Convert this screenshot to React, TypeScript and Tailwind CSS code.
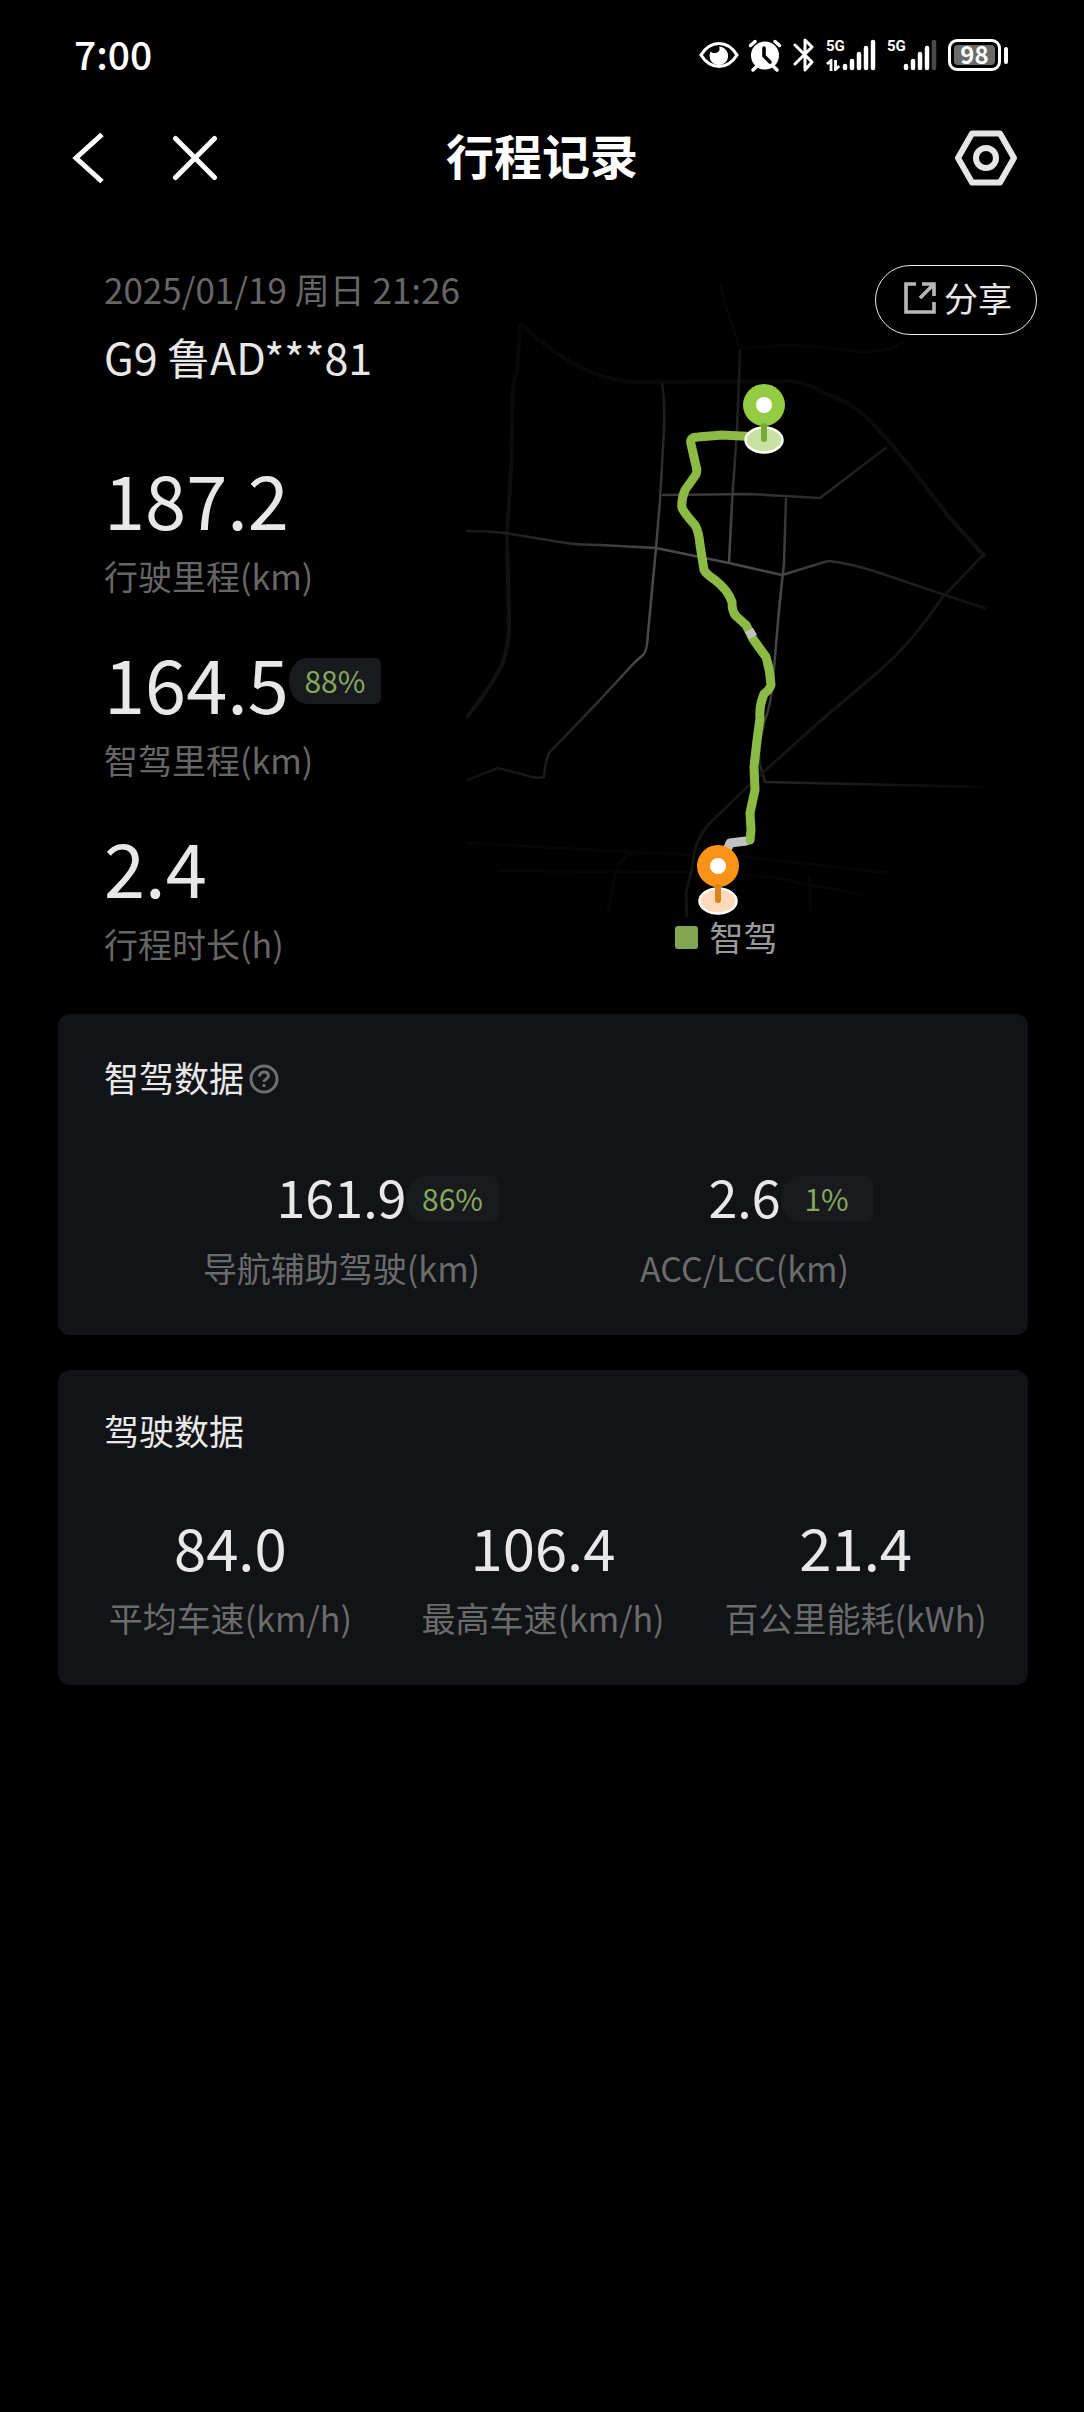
import React from 'react'

const driving = [
  { value: '84.0', label: '平均车速(km/h)' },
  { value: '106.4', label: '最高车速(km/h)' },
  { value: '21.4', label: '百公里能耗(kWh)' },
]

const Signal = ({ weak, data }: { weak?: boolean; data?: boolean }) => (
  <div className="flex h-8 items-end">
    <div className="flex h-8 w-4 flex-col justify-between">
      <span className="font-['Roboto'] text-[15px] leading-[15px] font-bold">5G</span>
      {data && (
        <svg viewBox="0 0 14 12" className="h-3 w-[14px]" fill="none" stroke="currentColor" strokeWidth="2.800">
          <path d="M1 5l4-3.400V12M9.500 1v9.400L13.400 7" />
        </svg>
      )}
    </div>
    <svg viewBox="0 0 34 32" className="h-8 w-[34px]" stroke="currentColor" strokeWidth="4.500" strokeLinecap="round">
      <path d="M3 29v-2M10 29v-7M17 29V15M24 29V9" />
      <path d="M31 29V3" stroke={weak ? '#4a4a4a' : 'currentColor'} />
    </svg>
  </div>
)

const StatusBar = () => (
  <div className="flex h-[110px] items-center justify-between pr-[76px] pl-[74px] text-white">
    <span className="pb-1 text-[39px] leading-[48px] font-medium">7:00</span>
    <div className="flex items-center">
      <svg viewBox="0 0 40 32" className="mr-[9px] h-8 w-10" fill="none">
        <path d="M2 16C7 8 13 4.500 20 4.500S33 8 38 16C33 24 27 27.500 20 27.500S7 24 2 16z" stroke="currentColor" strokeWidth="3.200" />
        <path d="M20 7.500c1.500 3 0 6-3.500 6.500-2.500.3-4-.8-5-1.500a9.300 9.300 0 1 0 8.500-5z" fill="currentColor" />
      </svg>
      <svg viewBox="0 0 34 34" className="mr-[11px] h-[34px] w-[34px]" fill="none" stroke="currentColor" strokeLinecap="round">
        <circle cx="17" cy="17.500" r="14" fill="currentColor" stroke="none" />
        <path d="M2.500 7.500l4.500-4M31.500 7.500l-4.500-4M8 29l-3 3M26 29l3 3" strokeWidth="3.400" />
        <path d="M16 10v8l6 6" stroke="#000" strokeWidth="3.600" strokeLinejoin="round" />
      </svg>
      <svg viewBox="0 0 22 34" className="mr-[11px] h-[34px] w-[22px]" fill="none" stroke="currentColor" strokeWidth="3" strokeLinejoin="round" strokeLinecap="round">
        <path d="M2 7l17 17-7 8V2l7 7L2 26" />
      </svg>
      <Signal data />
      <div className="w-[11px]" />
      <Signal weak />
      <div className="ml-[11px] flex h-8 w-[53px] items-center justify-center rounded-[9px] border-[3px] border-white p-[3px]">
        <span className="flex h-full w-full items-center justify-center rounded-[4px] bg-[#6b6b6b] pb-[2px] text-[24px] leading-[20px] font-bold">98</span>
      </div>
      <div className="ml-[3px] h-[17px] w-1 rounded-full bg-white" />
    </div>
  </div>
)

const TitleBar = () => (
  <header className="relative flex h-24 items-center justify-between pr-[66px] pl-[72px] text-white">
    <div className="flex items-center gap-[68px]">
      <button aria-label="返回">
        <svg viewBox="0 0 32 50" className="h-[50px] w-8" fill="none" stroke="currentColor" strokeWidth="5">
          <path d="M30 1.500L4 25l26 23.500" />
        </svg>
      </button>
      <button aria-label="关闭">
        <svg viewBox="0 0 46 46" className="h-[46px] w-[46px]" fill="none" stroke="currentColor" strokeWidth="5" strokeLinecap="round">
          <path d="M3.500 3.500l39 39M42.500 3.500l-39 39" />
        </svg>
      </button>
    </div>
    <h1 className="absolute left-1/2 -translate-x-1/2 pb-2 text-[48px] leading-[60px] font-bold">行程记录</h1>
    <button aria-label="设置" className="text-[#e6e6e6]">
      <svg viewBox="0 0 64 58" className="h-[58px] w-16" fill="none" stroke="currentColor" strokeWidth="6" strokeLinejoin="round">
        <path d="M18 4.500h28L60 29 46 53.500H18L4 29z" />
        <circle cx="32" cy="29" r="10" />
      </svg>
    </button>
  </header>
)

const Badge = ({ children, className }: { children: React.ReactNode; className: string }) => (
  <span className={'absolute left-full flex h-[46px] w-[92px] items-center justify-center rounded-[18px_6px_6px_18px/23px_6px_6px_23px] bg-[#191a1e] pb-[2px] text-[30px] leading-[40px] text-[#84a85c] ' + className}>
    {children}
  </span>
)

const Stat = ({ value, label, badge }: { value: string; label: string; badge?: string }) => (
  <div className="flex flex-col items-start gap-[18px]">
    <div className="relative text-[74px] leading-[80px] text-[#e8e8e9]">
      {value}
      {badge && <Badge className="top-4">{badge}</Badge>}
    </div>
    <div className="text-[34px] leading-[40px] text-[#666666]">{label}</div>
  </div>
)

const Pin = ({ x, y, color, stem, pad }: { x: number; y: number; color: string; stem: string; pad: string }) => (
  <g>
    <ellipse cx={x} cy={y + 35} rx="18.500" ry="12.500" fill={pad} stroke="#fff" strokeWidth="2.500" />
    <circle cx={x} cy={y} r="21" fill={color} />
    <circle cx={x} cy={y} r="8" fill="#fff" />
    <path d={`M${x} ${y + 21}v13`} stroke={stem} strokeWidth="6" strokeLinecap="round" />
  </g>
)

const TripMap = () => (
  <svg viewBox="466 277 520 640" className="h-auto w-full" fill="none" strokeLinejoin="round">
    <defs>
      <radialGradient id="road" gradientUnits="userSpaceOnUse" cx="700" cy="610" r="330">
        <stop offset="0" stopColor="#505050" />
        <stop offset="0.25" stopColor="#464646" />
        <stop offset="0.5" stopColor="#282828" />
        <stop offset="0.8" stopColor="#131313" />
        <stop offset="1" stopColor="#080808" />
      </radialGradient>
      <linearGradient id="ring" gradientUnits="userSpaceOnUse" x1="0" y1="320" x2="0" y2="560">
        <stop offset="0" stopColor="#060606" />
        <stop offset="1" stopColor="#101111" />
      </linearGradient>
    </defs>
    {/* ring roads */}
    <g stroke="url(#ring)" strokeWidth="4">
      <path d="M520 323L517 373Q513 380 513 387L511 470L507 535L509 620Q509 650 501 667Q490 688 466 718" />
      <path d="M520 323Q540 343 563 357Q600 382 640 382L790 381Q806 382 822 392Q860 405 880 432Q900 452 949 517L985 557" />
    </g>
    <g stroke="#060606" strokeWidth="3">
      <path d="M720 285L727 310L740 349Q790 342 839 349Q880 357 904 342" />
      <path d="M467 843L632 852L746 857L890 873M498 871L694 872L770 877L863 895" />
      <path d="M608 913L615 873Q620 855 639 852M810 877V911" />
    </g>
    <g stroke="url(#road)" strokeWidth="2.500">
      <path d="M740 349L739 381L737 430L732 503L729 563" />
      <path d="M662 383Q665 400 664 430L660 500L656 548L648 633Q647 652 643 655L635 662L598 702L549 753Q545 762 544 777Q534 779 525 775L498 768L467 780" />
      <path d="M466 531Q490 531 505 533L560 542Q575 545 600 545L656 548L729 563L782 575L828 561Q850 563 880 573L942 594L987 609" />
      <path d="M662 495L749 494L820 498L887 447" />
      <path d="M786 498L784 563L779 610L773 680Q771 705 765 720Q757 750 760 765L765 782L985 787" />
    </g>
    <path d="M985 553L942 598Q910 645 878 672L818 723L749 785L708 825Q696 840 694 855L691 873L686 893L687 920" stroke="#131414" strokeWidth="3" />
    {/* driven route, grey where assisted driving was off */}
    <g strokeWidth="9" strokeLinecap="round">
      <path d="M746 841L730 843L727 850" stroke="#c2c2c2" />
      <path d="M760 437L722 435L698 437Q689 437 691 444L696 466Q698 472 695 476L685 490Q681 500 682 508Q685 514 695 525Q699 532 700 545L704 570Q706 574 715 580Q728 590 732 602Q732 612 736 616L746 625L753 639L766 657Q770 670 771 685Q770 689 764 694Q759 706 760 718L757 740L754 767L755 790L750 813L751 830L750 840" stroke="#8bba45" />
    </g>
    <path d="M749 630L753 637" stroke="#c2c2c2" strokeWidth="9" />
    <Pin x={764} y={405} color="#93cb43" stem="#78a836" pad="#c8e2a1" />
    <Pin x={718} y={866} color="#fb9318" stem="#dc8419" pad="#fddbb8" />
  </svg>
)

const App = () => {
  return (
    <div className="min-h-screen bg-black font-['Noto_Sans_CJK_SC',sans-serif]">
      <StatusBar />
      <TitleBar />

      <section className="relative mt-[59px] flex pr-[98px] pl-[104px]">
        <div className="flex-1 pt-1">
          <div className="text-[35px] leading-[40px] whitespace-nowrap text-[#666666]">2025/01/19 周日 21:26</div>
          <h2 className="mt-[22px] text-[43px] leading-[50px] whitespace-nowrap text-[#e8e8e9]">G9 鲁AD***81</h2>
          <div className="mt-[77px] flex flex-col gap-[46px]">
            <Stat value="187.2" label="行驶里程(km)" />
            <Stat value="164.5" label="智驾里程(km)" badge="88%" />
            <Stat value="2.4" label="行程时长(h)" />
          </div>
        </div>
        <div className="w-[520px] pt-3">
          <TripMap />
          <div className="flex items-center justify-center gap-3 text-[34px] leading-[40px] text-[#9a9a9a]">
            <span className="h-[23px] w-[23px] rounded-[3px] bg-[#82a553]" />
            智驾
          </div>
        </div>
        <button className="absolute top-0 right-[47px] flex h-[70px] w-[162px] items-center justify-center gap-2 rounded-full border border-[#e8e8e9] pb-1 pl-1 text-[34px] leading-[40px] text-[#e8e8e9]">
          <svg viewBox="0 0 32 32" className="h-8 w-8" fill="none" stroke="#b8b8b8" strokeWidth="3.600">
            <path d="M12 2H2v28h28V20M18 2h12v12M29 3L16 16" />
          </svg>
          分享
        </button>
      </section>

      <main className="mt-[50px] flex flex-col gap-[35px] pr-14 pl-[58px]">
        <section className="rounded-xl bg-[#121316] pt-[43px] pb-[47px]">
          <div className="flex items-center gap-[5px] px-[46px]">
            <h2 className="text-[35px] leading-[40px] text-[#e8e8e9]">智驾数据</h2>
            <button aria-label="说明" className="pt-1">
              <svg viewBox="0 0 30 30" className="h-[30px] w-[30px]" fill="none" stroke="#6f7072" strokeWidth="3">
                <circle cx="15" cy="15" r="13" />
                <path d="M10.500 12.500c0-6 9-6 9-.8 0 3.200-4.500 3.200-4.500 6.300M15 20.200v2.800" />
              </svg>
            </button>
          </div>
          <div className="mt-[69px] grid grid-cols-2 px-[82px]">
            <div className="flex flex-col items-center gap-[22px]">
              <div className="relative text-[52px] leading-[60px] text-[#e8e8e9]">
                161.9
                <Badge className="top-[10px]">86%</Badge>
              </div>
              <div className="text-[34px] leading-[40px] text-[#6a6b6d]">导航辅助驾驶(km)</div>
            </div>
            <div className="flex flex-col items-center gap-[22px]">
              <div className="relative text-[52px] leading-[60px] text-[#e8e8e9]">
                2.6
                <Badge className="top-[10px]">1%</Badge>
              </div>
              <div className="text-[34px] leading-[40px] text-[#6a6b6d]">ACC/LCC(km)</div>
            </div>
          </div>
        </section>

        <section className="rounded-xl bg-[#121316] pt-[40px] pb-[47px]">
          <h2 className="px-[46px] text-[35px] leading-[40px] text-[#e8e8e9]">驾驶数据</h2>
          <div className="mt-[66px] grid grid-cols-3 px-4">
            {driving.map((item) => (
              <div key={item.label} className="flex flex-col items-center gap-[22px]">
                <div className="text-[58px] leading-[60px] text-[#e8e8e9]">{item.value}</div>
                <div className="text-[34px] leading-[40px] text-[#6a6b6d]">{item.label}</div>
              </div>
            ))}
          </div>
        </section>
      </main>
    </div>
  )
}

export default App
